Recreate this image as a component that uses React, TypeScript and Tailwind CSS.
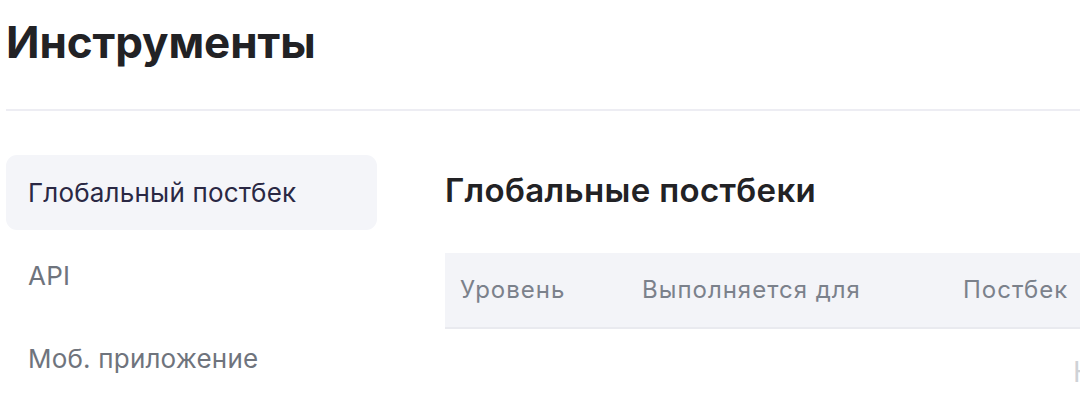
const tabs = ["Глобальный постбек", "API", "Моб. приложение"];
const columns = [
  { label: "Уровень", width: "w-[182px]" },
  { label: "Выполняется для", width: "w-[321px]" },
  { label: "Постбек", width: "w-[200px]" },
];

const App = () => {
  return (
    <div className="w-[1080px] h-[400px] overflow-hidden bg-white pl-[6px] font-['Inter',sans-serif]">
      <h1 className="pt-[16px] text-[44px] leading-[52px] font-bold text-[#222225] tracking-[-0.1px]">
        Инструменты
      </h1>
      <div className="mt-[41px] h-[2px] bg-[#ededf3]" />

      <div className="mt-[44px] flex">
        {/* Sidebar */}
        <nav className="w-[371px] shrink-0 flex flex-col gap-[8px]">
          {tabs.map((tab, idx) => (
            <div
              key={tab}
              className={
                idx === 0
                  ? "h-[75px] flex items-center pl-[22px] rounded-[11px] bg-[#f4f5f9] text-[26px] tracking-[0.2px] text-[#2a2844]"
                  : "h-[75px] flex items-center pl-[22px] rounded-[11px] text-[26px] tracking-[0.2px] text-[#6f747d]"
              }
            >
              {tab}
            </div>
          ))}
        </nav>

        {/* Content */}
        <div className="ml-[68px] flex-1 min-w-0">
          <h2 className="mt-[15px] text-[33px] leading-[40px] font-semibold tracking-[0.35px] text-[#222225]">
            Глобальные постбеки
          </h2>
          <div className="mt-[43px] h-[76px] flex items-center pl-[15px] bg-[#f3f4f8] border-b-2 border-[#e9eaef] whitespace-nowrap">
            {columns.map((col) => (
              <div key={col.label} className={`${col.width} shrink-0 text-[24px] tracking-[1px] text-[#7b818b]`}>
                {col.label}
              </div>
            ))}
          </div>
          <div className="mt-[27px] pl-[628px] text-[28px] leading-[32px] text-[#cfd2d6] whitespace-nowrap">
            Нет данных
          </div>
        </div>
      </div>
    </div>
  );
};

export default App;
